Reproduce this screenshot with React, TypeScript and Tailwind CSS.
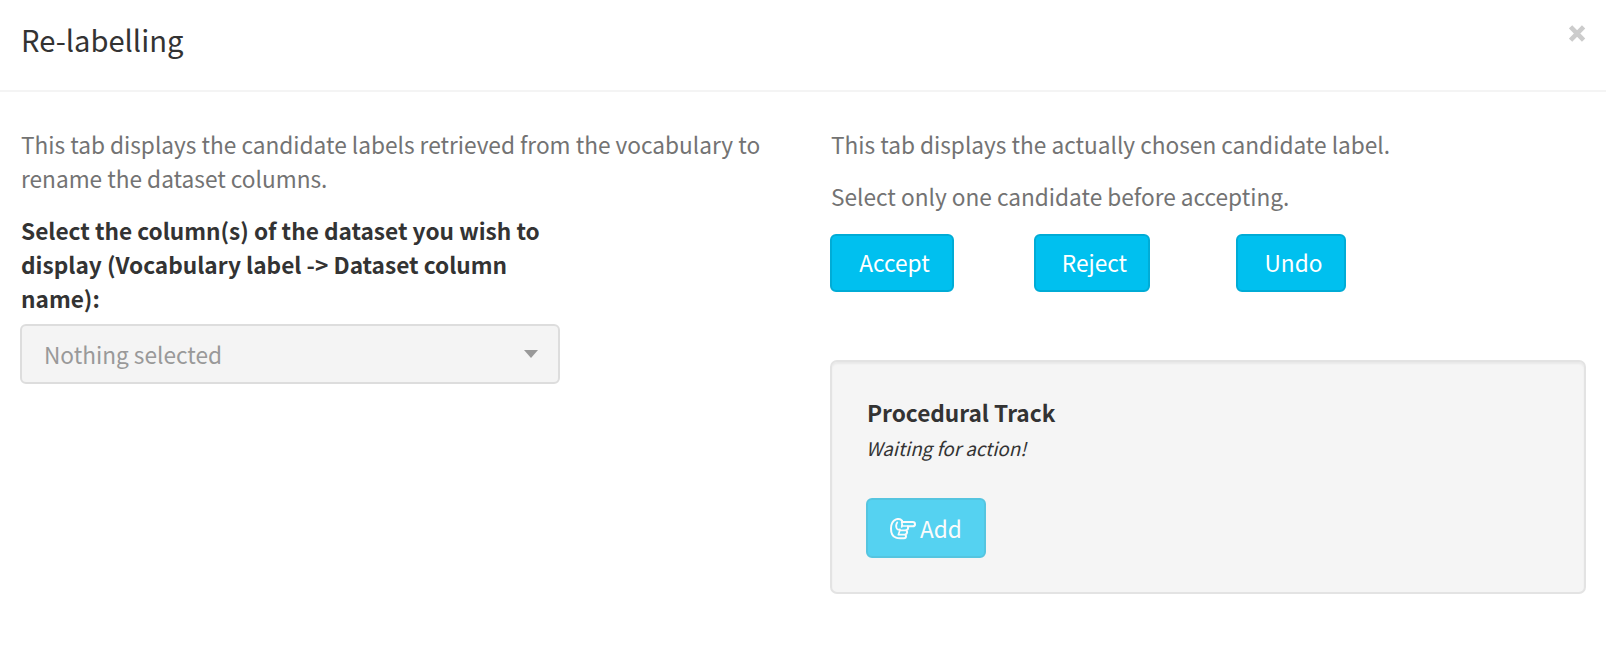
const button = "h-[58px] rounded-[6px] border-2 border-[#00acd6] bg-[#00c0ef] pl-[5px] text-white";

function HandPointRight({ className }: { className: string }) {
  return (
    <svg viewBox="0 0 78 64" className={className} fill="none" stroke="currentColor" strokeWidth="6" strokeLinecap="round" strokeLinejoin="round">
      <path d="M36 8C31 3 24 2 18 4 8 8 3 19 3 32c0 14 6 24 15 27 4 2 8 2 13 2h11c4 0 6-3 6-6 0-2-1-4-2-5 4-2 6-5 5-9 0-2-1-3-2-4 4-2 6-6 5-10v-2h14c5 0 7-3 7-6.500s-2-6.500-7-6.500H36" />
      <path d="M22 13c-4 6-5 13-2 18 2 4 6 5 10 3M35 12c2 5 2 10 0 15M36 24h17M31 37h18M27 50h18M30 36l-5 14" strokeWidth="5" />
    </svg>
  );
}

export default function App() {
  return (
    <div className="h-[646px] w-[1606px] overflow-hidden bg-white font-['Noto_Sans_CJK_SC',sans-serif] text-[22.65px] leading-[34px] text-[#737373]">
      <header className="flex h-[92px] justify-between border-b-2 border-[#f4f4f4] pr-[20px] pl-[21px]">
        <h1 className="pt-[22px] text-[29.15px] text-[#333]">Re-labelling</h1>
        <button aria-label="Close" className="mt-[25px] h-[17px] w-[17px] text-[#ccc]">
          <svg viewBox="0 0 17 17" className="h-[17px] w-[17px]" fill="none" stroke="currentColor" strokeWidth="4.6">
            <path d="M1.6 1.8 14.6 15.2M14.6 1.8 1.6 15.2" />
          </svg>
        </button>
      </header>
      <main className="flex pt-[36px]">
        <section className="w-[810px] pl-[20px]">
          <div className="pl-[1px]">
            <p>This tab displays the candidate labels retrieved from the vocabulary to<br />rename the dataset columns.</p>
            <p className="mt-[18px] font-bold text-[#333]">Select the column(s) of the dataset you wish to<br />display (Vocabulary label -&gt; Dataset column<br />name):</p>
          </div>
          <button className="mt-[8px] flex h-[60px] w-[540px] items-center justify-between rounded-[6px] border-2 border-[#ddd] bg-[#f4f4f4] pr-[20px] pl-[22px] text-[#999]">
            <span className="pt-[2px]">Nothing selected</span>
            <span className="border-x-[7px] border-t-[8px] border-x-transparent border-t-[#999]" />
          </button>
        </section>
        <section className="w-[776px] pl-[20px]">
          <div className="pl-[1px]">
            <p>This tab displays the actually chosen candidate label.</p>
            <p className="mt-[18px]">Select only one candidate before accepting.</p>
          </div>
          <div className="mt-[20px] flex">
            <button className={`${button} w-[124px]`}>Accept</button>
            <button className={`${button} ml-[80px] w-[116px]`}>Reject</button>
            <button className={`${button} ml-[86px] w-[110px]`}>Undo</button>
          </div>
          <div className="mt-[68px] h-[234px] rounded-[7px] border-2 border-[#e3e3e3] bg-[#f5f5f5] pt-[34px] pl-[34px] shadow-[inset_0_2px_2px_rgba(0,0,0,0.05)]">
            <h2 className="pl-[1px] font-bold text-[#333]">Procedural Track</h2>
            <p className="pt-[1px] text-[18.8px] text-[#333] italic">Waiting for action!</p>
            <button className="mt-[33px] flex h-[60px] w-[120px] items-center rounded-[6px] border-2 border-[#00acd6] bg-[#00c0ef] pt-[2px] pl-[22px] text-white opacity-65">
              <HandPointRight className="mr-[4px] h-[21.33px] w-[26px] shrink-0" />
              Add
            </button>
          </div>
        </section>
      </main>
    </div>
  );
}
